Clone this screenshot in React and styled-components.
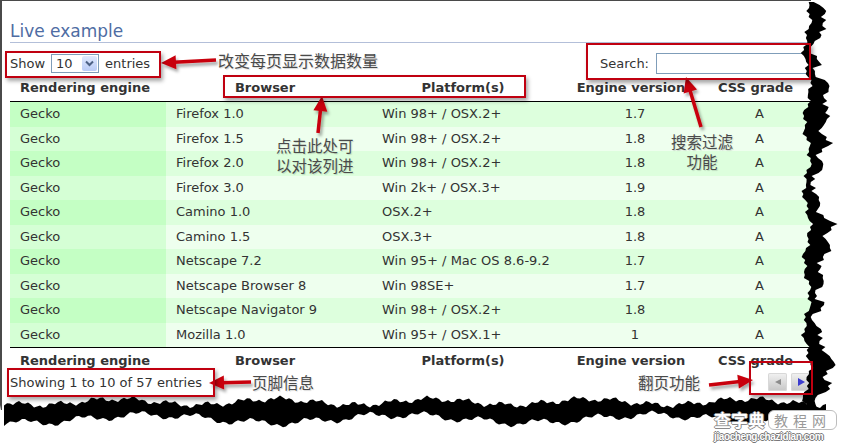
import React from 'react';
import styled, { createGlobalStyle } from 'styled-components';

const GlobalStyle = createGlobalStyle`
  html, body { margin: 0; padding: 0; background: #fff; }
  body { font-family: "DejaVu Sans", Verdana, sans-serif; color: #333; }
`;

const rows = [
    ['Gecko', 'Firefox 1.0', 'Win 98+ / OSX.2+', '1.7', 'A'],
    ['Gecko', 'Firefox 1.5', 'Win 98+ / OSX.2+', '1.8', 'A'],
    ['Gecko', 'Firefox 2.0', 'Win 98+ / OSX.2+', '1.8', 'A'],
    ['Gecko', 'Firefox 3.0', 'Win 2k+ / OSX.3+', '1.9', 'A'],
    ['Gecko', 'Camino 1.0', 'OSX.2+', '1.8', 'A'],
    ['Gecko', 'Camino 1.5', 'OSX.3+', '1.8', 'A'],
    ['Gecko', 'Netscape 7.2', 'Win 95+ / Mac OS 8.6-9.2', '1.7', 'A'],
    ['Gecko', 'Netscape Browser 8', 'Win 98SE+', '1.7', 'A'],
    ['Gecko', 'Netscape Navigator 9', 'Win 98+ / OSX.2+', '1.8', 'A'],
    ['Gecko', 'Mozilla 1.0', 'Win 95+ / OSX.1+', '1', 'A']
];

const columns = [
    { label: 'Rendering engine', width: 156 },
    { label: 'Browser', width: 206 },
    { label: 'Platform(s)', width: 190 },
    { label: 'Engine version', width: 146, center: true },
    { label: 'CSS grade', width: 103, center: true }
];

const Page = styled.div`
    position: relative;
    width: 848px;
    height: 443px;
    overflow: hidden;
    background: #fff;
`;

const Sheet = styled.div`
    width: 811px;
    height: 410px;
    box-sizing: border-box;
    border-top: 1px solid #4a4a4a;
    border-left: 2px solid #4a4a4a;
    padding: 19px 0 0 8px;
`;

const Title = styled.h1`
    margin: 0;
    font-size: 17px;
    font-weight: normal;
    line-height: 22px;
    color: #4e6ca3;
    border-bottom: 1px solid #b3bfd9;
`;

const Controls = styled.div`
    display: flex;
    justify-content: space-between;
    align-items: center;
    width: 801px;
    height: 20px;
    margin-top: 10px;
    font-size: 13px;
`;

const Field = styled.label`
    display: flex;
    align-items: center;
`;

const Select = styled.span`
    display: inline-flex;
    align-items: stretch;
    width: 48px;
    height: 19px;
    box-sizing: border-box;
    margin: 0 6px;
    border: 1px solid #7f9db9;
    background: #fff;
`;

const SelectValue = styled.span`
    flex: 1;
    padding-left: 4px;
    line-height: 17px;
`;

const SelectButton = styled.span`
    width: 15px;
    display: flex;
    align-items: center;
    justify-content: center;
    margin: 1px;
    border-radius: 2px;
    background: linear-gradient(#dfe8fd, #b9cbf6);
`;

const SearchInput = styled.input`
    width: 155px;
    height: 21px;
    box-sizing: border-box;
    margin: 0 0 0 7px;
    border: 1px solid #7f9db9;
    padding: 0;
`;

const Table = styled.table`
    width: 801px;
    margin-top: 3px;
    border-collapse: collapse;
    table-layout: fixed;
    font-size: 13px;
`;

const HeadCell = styled.th`
    padding: ${p => (p.$foot ? '4px 18px 2px 10px' : '3px 18px 5px 10px')};
    line-height: 17px;
    text-align: center;
    font-weight: bold;
    color: #333;
    white-space: nowrap;
    border-bottom: ${p => (p.$foot ? 'none' : '1px solid #000')};
    border-top: ${p => (p.$foot ? '1px solid #000' : 'none')};
`;

const Row = styled.tr`
    background: ${p => (p.$even ? '#eeffee' : '#ddffdd')};
`;

const Cell = styled.td`
    padding: 3px 10px;
    height: 18.5px;
    line-height: 18px;
    white-space: nowrap;
    text-align: ${p => (p.$center ? 'center' : 'left')};
    background: ${p => (p.$sorted ? (p.$even ? '#d5ffd5' : '#c4ffc4') : 'transparent')};
    color: #333;
`;

const InfoBar = styled.div`
    display: flex;
    justify-content: space-between;
    align-items: center;
    width: 801px;
    height: 20px;
    margin-top: 1px;
    font-size: 13px;
`;

const Pager = styled.div`
    display: flex;
    gap: 4px;
    margin-right: 1px;
`;

const PageButton = styled.span`
    width: 19px;
    height: 18px;
    display: flex;
    align-items: center;
    justify-content: center;
    border-radius: 2px;
    background: linear-gradient(#f2f2f2, #c6c6c6);
    box-shadow: inset 0 0 0 1px #d8d8d8;
`;

const Mark = styled.div`
    position: absolute;
    left: ${p => p.$x}px;
    top: ${p => p.$y}px;
    width: ${p => p.$w}px;
    height: ${p => p.$h}px;
    box-sizing: border-box;
    border: 2px solid #c00010;
    box-shadow: 2px 3px 4px rgba(0, 0, 0, 0.35);
`;

const Note = styled.div`
    position: absolute;
    left: ${p => p.$x}px;
    top: ${p => p.$y}px;
    font-family: "Noto Sans CJK SC", sans-serif;
    font-size: ${p => p.$size || 15.5}px;
    line-height: 20px;
    color: #4a4a4a;
    text-align: center;
    white-space: nowrap;
    text-shadow: 1px 1px 1px rgba(0, 0, 0, 0.15);
`;

const Overlay = styled.svg`
    position: absolute;
    left: 0;
    top: 0;
    pointer-events: none;
`;

const Watermark = styled.div`
    position: absolute;
    left: 714px;
    top: 410px;
    display: grid;
    grid-template-columns: auto auto;
    column-gap: 3px;
    row-gap: 1px;
    align-items: center;
    color: #fff;
    font-family: "Noto Sans CJK SC", sans-serif;
`;

const MarkBig = styled.span`
    font-size: 17px;
    font-weight: bold;
    line-height: 20px;
    text-shadow: -1px 0 #8a8a8a, 1px 0 #8a8a8a, 0 -1px #8a8a8a, 0 1px #8a8a8a;
`;

const MarkTag = styled.span`
    padding: 0 5px;
    border: 1px solid #bdbdbd;
    border-radius: 6px;
    font-size: 14px;
    line-height: 18px;
    letter-spacing: 5px;
    color: #999;
    background: #fff;
`;

const MarkUrl = styled.span`
    grid-column: 1 / 3;
    font-family: "Liberation Sans", Arial, sans-serif;
    font-size: 10px;
    font-weight: bold;
    letter-spacing: -0.4px;
    line-height: 11px;
    text-shadow: -1px 0 #777, 1px 0 #777, 0 -1px #777, 0 1px #777;
`;

// jagged torn paper edges, computed once
const tornRight = () => {
    const left = [];
    const right = [];
    for (let y = 2; y <= 420; y += 3) {
        const taper = Math.min(1, y / 12);
        const l = 807 + 3 * Math.sin(y * 0.09) + 2 * Math.sin(y * 0.31 + 1) + 1.5 * Math.sin(y * 0.87 + 2);
        const r = l + taper * (14 + 6 * Math.sin(y * 0.05 + 2) + 4 * Math.sin(y * 0.23 + 0.3) + 2 * Math.sin(y * 0.71));
        left.push([l, y]);
        right.push([r + 1, y]);
    }
    return { left, right };
};

const tornBottom = () => {
    const top = [];
    const bottom = [];
    for (let x = 4; x <= 826; x += 3) {
        const t = 402 + 3 * Math.sin(x * 0.04) + 2 * Math.sin(x * 0.17 + 1) + 1.5 * Math.sin(x * 0.6);
        const b = 419 + 4 * Math.sin(x * 0.025 + 1) + 3 * Math.sin(x * 0.11 + 2) + 1.5 * Math.sin(x * 0.47);
        top.push([x, t]);
        bottom.push([x, b]);
    }
    return { top, bottom };
};

const pts = list => list.map(p => p[0].toFixed(1) + ',' + p[1].toFixed(1)).join(' ');

const Arrow = ({ from, to }) => {
    const dx = to[0] - from[0];
    const dy = to[1] - from[1];
    const len = Math.sqrt(dx * dx + dy * dy);
    const ux = dx / len;
    const uy = dy / len;
    const bx = to[0] - ux * 15;
    const by = to[1] - uy * 15;
    const head = [
        to,
        [bx - uy * 7, by + ux * 7],
        [bx + uy * 7, by - ux * 7]
    ];
    return (
        <g filter="url(#shadow)">
            <line x1={from[0]} y1={from[1]} x2={bx + ux * 2} y2={by + uy * 2} stroke="#c8000c" strokeWidth="3.5" />
            <polygon points={pts(head)} fill="#c8000c" />
        </g>
    );
};

const Decorations = () => {
    const r = tornRight();
    const b = tornBottom();
    const rightStrip = [...r.left, ...r.right.slice().reverse()];
    const rightWhite = [...r.right, [848, 420], [848, 0], [r.right[0][0], 0]];
    const bottomStrip = [...b.top, ...b.bottom.slice().reverse()];
    const bottomWhite = [[0, 405], ...b.bottom, [848, 420], [848, 443], [0, 443]];
    return (
        <Overlay width="848" height="443" viewBox="0 0 848 443">
            <defs>
                <filter id="shadow" x="-20%" y="-20%" width="160%" height="160%">
                    <feDropShadow dx="2" dy="3" stdDeviation="1.8" floodColor="#000" floodOpacity="0.35" />
                </filter>
            </defs>
            <polygon points={pts(rightWhite)} fill="#fff" />
            <polygon points={pts(bottomWhite)} fill="#fff" />
            <polygon points={pts(rightStrip)} fill="#000" />
            <polygon points={pts(bottomStrip)} fill="#000" />
            <Arrow from={[216, 60]} to={[161, 63]} />
            <Arrow from={[318, 133]} to={[322, 96]} />
            <Arrow from={[701, 127]} to={[686, 77]} />
            <Arrow from={[251, 382]} to={[209, 383]} />
            <Arrow from={[709, 385]} to={[753, 380]} />
        </Overlay>
    );
};

const Chevron = () => (
    <svg width="9" height="7" viewBox="0 0 9 7">
        <path d="M1 1.5 L4.5 5 L8 1.5" fill="none" stroke="#4d6185" strokeWidth="2" />
    </svg>
);

const Triangle = ({ dir, color }) => (
    <svg width="10" height="10" viewBox="0 0 10 10">
        {dir === 'left'
            ? <polygon points="2,5 8,2 8,8" fill={color} />
            : <polygon points="2,1 9,5 2,9" fill={color} />}
    </svg>
);

const App = () => {
    return (
        <Page>
            <GlobalStyle />
            <Sheet>
                <Title>Live example</Title>
                <Controls>
                    <Field>
                        Show
                        <Select>
                            <SelectValue>10</SelectValue>
                            <SelectButton><Chevron /></SelectButton>
                        </Select>
                        entries
                    </Field>
                    <Field>
                        Search:
                        <SearchInput type="text" />
                    </Field>
                </Controls>
                <Table>
                    <colgroup>
                        {columns.map(c => <col key={c.label} style={{ width: c.width }} />)}
                    </colgroup>
                    <thead>
                        <tr>
                            {columns.map(c => <HeadCell key={c.label}>{c.label}</HeadCell>)}
                        </tr>
                    </thead>
                    <tbody>
                        {rows.map((row, index) => (
                            <Row key={index} $even={index % 2 === 1}>
                                {row.map((value, col) => (
                                    <Cell key={col}
                                        $even={index % 2 === 1}
                                        $sorted={col === 0}
                                        $center={columns[col].center}>
                                        {value}
                                    </Cell>
                                ))}
                            </Row>
                        ))}
                    </tbody>
                    <tfoot>
                        <tr>
                            {columns.map(c => <HeadCell key={c.label} $foot>{c.label}</HeadCell>)}
                        </tr>
                    </tfoot>
                </Table>
                <InfoBar>
                    <span>Showing 1 to 10 of 57 entries</span>
                    <Pager>
                        <PageButton><Triangle dir="left" color="#8c8c8c" /></PageButton>
                        <PageButton><Triangle dir="right" color="#3d3dcf" /></PageButton>
                    </Pager>
                </InfoBar>
            </Sheet>

            <Decorations />

            <Mark $x={5} $y={51} $w={156} $h={27} />
            <Mark $x={223} $y={75} $w={303} $h={23} />
            <Mark $x={586} $y={43} $w={225} $h={37} />
            <Mark $x={7} $y={368} $w={208} $h={29} />
            <Mark $x={749} $y={361} $w={64} $h={34} />

            <Note $x={218} $y={50} $size={16}>改变每页显示数据数量</Note>
            <Note $x={276} $y={135}>点击此处可<br />以对该列进</Note>
            <Note $x={671} $y={131}>搜索过滤<br />功能</Note>
            <Note $x={252} $y={372}>页脚信息</Note>
            <Note $x={638} $y={372}>翻页功能</Note>

            <Watermark>
                <MarkBig>查字典</MarkBig>
                <MarkTag>教程网</MarkTag>
                <MarkUrl>jiaocheng.chazidian.com</MarkUrl>
            </Watermark>
        </Page>
    );
};

export default App;
